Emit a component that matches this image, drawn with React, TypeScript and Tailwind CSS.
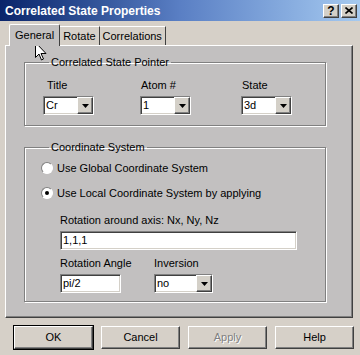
import React from 'react';

const sunken =
  'border border-t-[#808080] border-l-[#808080] border-b-white border-r-white shadow-[inset_1px_1px_0_#404040,inset_-1px_-1px_0_#d4d0c8]';

const raised =
  'border border-t-white border-l-white border-b-[#404040] border-r-[#404040] shadow-[inset_-1px_-1px_0_#808080]';

const Combo: React.FC<{ value: string; width: string }> = ({ value, width }) => (
  <div className={`flex items-stretch bg-white h-[19px] ${sunken} ${width}`}>
    <span className="flex-1 pl-[2px] leading-[17px] text-black">{value}</span>
    <span className={`w-[16px] bg-[#d4d0c8] flex items-center justify-center ${raised}`}>
      <svg width="7" height="4" viewBox="0 0 7 4">
        <path d="M0 0h7L3.5 4z" fill="#000" />
      </svg>
    </span>
  </div>
);

const TextBox: React.FC<{ value: string; width: string }> = ({ value, width }) => (
  <div className={`bg-white h-[19px] pl-[2px] leading-[17px] text-black ${sunken} ${width}`}>{value}</div>
);

const Radio: React.FC<{ checked?: boolean; label: string }> = ({ checked, label }) => (
  <div className="flex items-center gap-[4px] h-[14px]">
    <span className="relative w-[12px] h-[12px] rounded-full bg-white border border-t-[#808080] border-l-[#808080] border-b-white border-r-white flex items-center justify-center">
      {checked && <span className="w-[4px] h-[4px] rounded-full bg-black" />}
    </span>
    <span>{label}</span>
  </div>
);

const Group: React.FC<{ title: string; className?: string; children: React.ReactNode }> = ({ title, className, children }) => (
  <fieldset
    className={`w-[302px] border border-[#808080] shadow-[inset_1px_1px_0_#fff,1px_1px_0_#fff] px-[16px] ${className ?? ''}`}
  >
    <legend className="ml-[8px] px-[2px] leading-[12px]">{title}</legend>
    {children}
  </fieldset>
);

const Button: React.FC<{ label: string; def?: boolean; disabled?: boolean }> = ({ label, def, disabled }) => (
  <div
    className={`w-[79px] h-[23px] flex items-center justify-center ${raised} ${def ? 'outline outline-1 outline-black' : ''} ${
      disabled ? 'text-[#808080] [text-shadow:1px_1px_0_#fff]' : 'text-black'
    }`}
  >
    {label}
  </div>
);

export default function App() {
  return (
    <div className="relative w-[360px] h-[355px] bg-[#d6d0c8] overflow-hidden text-[11px] text-black font-['Liberation_Sans',Arial,sans-serif]">
      {/* title bar */}
      <div className="h-[21px] flex items-center justify-between pl-[5px] pr-[3px] bg-gradient-to-r from-[#0a246a] via-[#5a7fc4] to-[#a6caf0]">
        <span className="text-white font-bold text-[12px]">Correlated State Properties</span>
        <div className="flex gap-[2px]">
          <span className={`w-[16px] h-[14px] bg-[#d4d0c8] flex items-center justify-center font-bold text-[12px] leading-none ${raised}`}>?</span>
          <span className={`w-[16px] h-[14px] bg-[#d4d0c8] flex items-center justify-center ${raised}`}>
            <svg width="8" height="7" viewBox="0 0 8 7">
              <path d="M0.5 0.5l7 6M7.5 0.5l-7 6" stroke="#000" strokeWidth="1.6" />
            </svg>
          </span>
        </div>
      </div>

      {/* tabs */}
      <div className="flex items-end h-[24px] pl-[9px]">
        <div className="relative z-10 h-[22px] px-[5px] mb-[-1px] bg-[#c2c0c0] border-l border-t border-white border-r border-r-[#404040] rounded-t-[2px] flex items-center">
          General
        </div>
        <div className="h-[19px] px-[3px] border-t border-white border-r border-r-[#404040] flex items-center">Rotate</div>
        <div className="h-[19px] px-[3px] border-t border-white border-r border-r-[#404040] flex items-center">Correlations</div>
      </div>

      {/* panel */}
      <div className="ml-[5px] w-[348px] h-[273px] bg-[#c2c0c0] border border-t-white border-l-white border-b-[#404040] border-r-[#404040] shadow-[inset_-1px_-1px_0_#808080] pl-[18px] pt-[10px]">
        <Group title="Correlated State Pointer" className="h-[70px]">
          <div className="flex mt-[11px] pl-[2px]">
            <div className="w-[97px] flex flex-col gap-[5px]">
              <span className="pl-[4px] leading-[12px]">Title</span>
              <Combo value="Cr" width="w-[51px]" />
            </div>
            <div className="w-[101px] flex flex-col gap-[5px]">
              <span className="pl-[1px] leading-[12px]">Atom #</span>
              <Combo value="1" width="w-[51px]" />
            </div>
            <div className="flex flex-col gap-[5px]">
              <span className="pl-[1px] leading-[12px]">State</span>
              <Combo value="3d" width="w-[51px]" />
            </div>
          </div>
        </Group>

        <Group title="Coordinate System" className="h-[161px] mt-[15px]">
          <div className="flex flex-col gap-[11px] mt-[8px]">
            <Radio label="Use Global Coordinate System" />
            <Radio checked label="Use Local Coordinate System by applying" />
          </div>
          <div className="pl-[19px] mt-[14px]">
            <div className="leading-[12px]">Rotation around axis: Nx, Ny, Nz</div>
            <TextBox value="1,1,1" width="w-[237px] mt-[5px]" />
            <div className="flex mt-[7px]">
              <div className="w-[94px] flex flex-col gap-[5px]">
                <span className="leading-[12px]">Rotation Angle</span>
                <TextBox value="pi/2" width="w-[61px]" />
              </div>
              <div className="flex flex-col gap-[5px]">
                <span className="leading-[12px]">Inversion</span>
                <Combo value="no" width="w-[59px]" />
              </div>
            </div>
          </div>
        </Group>
      </div>

      {/* buttons */}
      <div className="flex gap-[8px] pl-[14px] mt-[8px]">
        <Button label="OK" def />
        <Button label="Cancel" />
        <Button label="Apply" disabled />
        <Button label="Help" />
      </div>

      {/* mouse cursor */}
      <svg className="absolute left-[35px] top-[42px]" width="12" height="19" viewBox="0 0 12 19">
        <path d="M0.5 0.5v15l3.5-3.5 2.5 6 2-1-2.5-5.5h5z" fill="#fff" stroke="#000" strokeWidth="1" />
      </svg>
    </div>
  );
}
